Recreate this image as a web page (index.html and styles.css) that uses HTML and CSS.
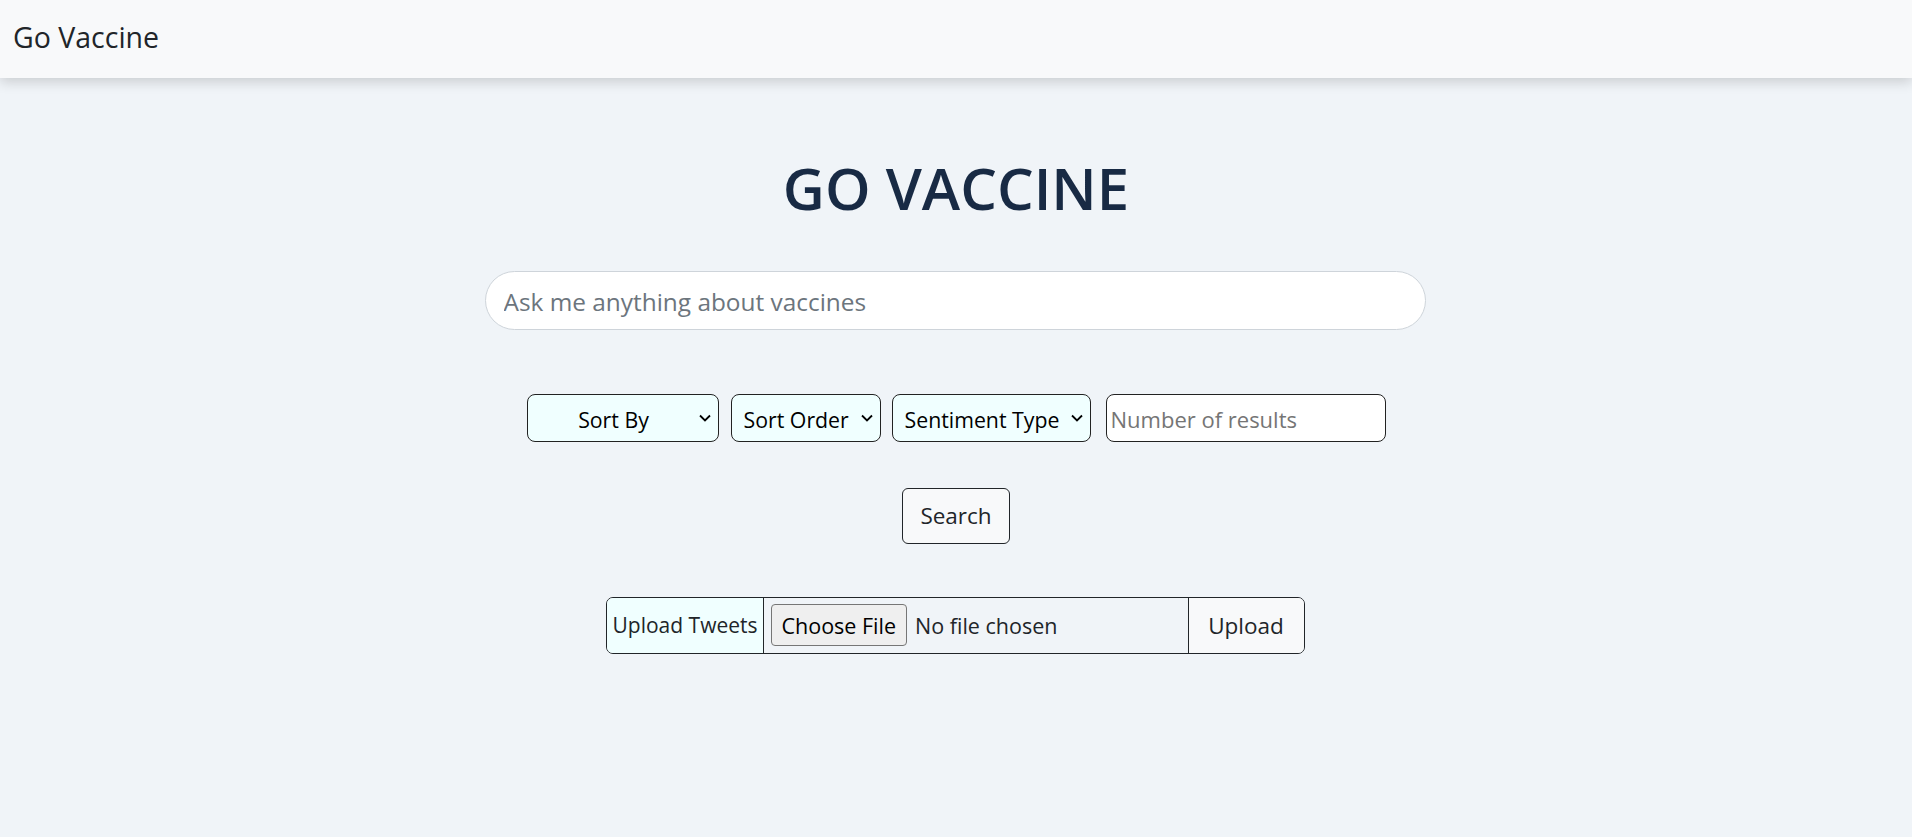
FILE: index.html
```html
<!DOCTYPE html>
<html lang="en">
<head>
<meta charset="utf-8">
<title>Go Vaccine</title>
<link rel="stylesheet" href="styles.css">
</head>
<body>
<nav class="navbar">
  <a class="brand" href="#">Go Vaccine</a>
</nav>
<main class="main">
  <h1 class="title">GO VACCINE</h1>
  <input class="query" type="text" placeholder="Ask me anything about vaccines">
  <div class="filters">
    <span class="sel sel-sortby">
      <select class="select select-center"><option>Sort By</option></select>
      <svg class="chev" viewBox="0 0 12 8" width="12" height="8"><polyline points="1,1.5 6,6.5 11,1.5" fill="none" stroke="#000" stroke-width="1.8"/></svg>
    </span>
    <span class="sel sel-order">
      <select class="select"><option>Sort Order</option></select>
      <svg class="chev" viewBox="0 0 12 8" width="12" height="8"><polyline points="1,1.5 6,6.5 11,1.5" fill="none" stroke="#000" stroke-width="1.8"/></svg>
    </span>
    <span class="sel sel-sent">
      <select class="select"><option>Sentiment Type</option></select>
      <svg class="chev" viewBox="0 0 12 8" width="12" height="8"><polyline points="1,1.5 6,6.5 11,1.5" fill="none" stroke="#000" stroke-width="1.8"/></svg>
    </span>
    <input class="count" type="number" placeholder="Number of results">
  </div>
  <button class="search-btn" type="button">Search</button>
  <div class="upload">
    <span class="upload-label">Upload Tweets</span>
    <span class="upload-file"><input class="file" type="file"></span>
    <button class="upload-btn" type="button">Upload</button>
  </div>
</main>
</body>
</html>
```
FILE: styles.css
```css
* { box-sizing: border-box; }
html, body { margin: 0; padding: 0; }
body {
  background: #f0f4f8;
  font-family: "Open Sans", "Noto Sans", sans-serif;
  color: #212529;
  min-height: 837px;
}
.navbar {
  height: 78px;
  background: #f8f9fa;
  box-shadow: 0 4px 12px rgba(0, 0, 0, 0.16);
  display: flex;
  align-items: center;
  padding: 0 0 3px 13px;
  position: relative;
  z-index: 1;
}
.brand {
  font-size: 28.5px;
  color: #212529;
  text-decoration: none;
  line-height: 1.362;
}
.main {
  display: flex;
  flex-direction: column;
  align-items: center;
  padding-top: 75px;
}
.title {
  margin: 0;
  font-size: 58px;
  line-height: 1.2;
  font-weight: 600;
  color: #182a44;
  letter-spacing: 0;
}
.query {
  margin-top: 48px;
  margin-right: 2px;
  width: 941px;
  height: 59px;
  border: 1px solid #ced4da;
  border-radius: 30px;
  background: #fff;
  padding: 3px 18px 0;
  font-family: inherit;
  font-size: 24.4px;
  color: #212529;
  outline: none;
}
.query::placeholder { color: #6c757d; }
.filters {
  margin-top: 64px;
  display: flex;
  align-items: center;
}
.sel {
  position: relative;
  display: inline-flex;
}
.sel-order { margin-left: 12px; }
.sel-sent { margin-left: 11px; }
.select {
  appearance: none;
  -webkit-appearance: none;
  height: 48px;
  border: 1px solid #222;
  border-radius: 8px;
  background: #f0ffff;
  font-family: inherit;
  font-size: 21.3px;
  color: #000;
  padding: 3px 30px 0 12px;
}
.select-center {
  text-align: center;
  text-align-last: center;
}
.sel-sortby .select { width: 192px; }
.sel-order .select { width: 150px; }
.sel-sent .select { width: 199px; }
.chev {
  position: absolute;
  right: 8px;
  top: 20px;
  pointer-events: none;
}
.count {
  margin-left: 15px;
  width: 280px;
  height: 48px;
  border: 1px solid #222;
  border-radius: 8px;
  background: #fff;
  padding: 3px 4px 0;
  font-family: inherit;
  font-size: 22px;
  color: #000;
}
.count::placeholder { color: #757575; }
.search-btn {
  margin-top: 46px;
  width: 108px;
  height: 56px;
  background: #f8f9fa;
  border: 1px solid #212529;
  border-radius: 6px;
  font-family: inherit;
  font-size: 22.5px;
  color: #212529;
  padding: 0;
}
.upload {
  margin-top: 53px;
  margin-right: 2px;
  width: 699px;
  height: 57px;
  display: flex;
  border: 1px solid #212529;
  border-radius: 7px;
  overflow: hidden;
}
.upload-label {
  width: 157px;
  background: #f0ffff;
  border-right: 1px solid #212529;
  display: flex;
  align-items: center;
  padding: 0 0 0 6px;
  font-size: 21px;
  color: #212529;
  white-space: nowrap;
}
.upload-file {
  flex: 1;
  display: flex;
  align-items: center;
  padding: 0 0 0 7px;
}
.file {
  width: 100%;
  font-family: inherit;
  font-size: 21.5px;
  color: #212529;
}
.file::file-selector-button {
  height: 42px;
  margin-right: 8px;
  padding: 0 10px;
  background: #efefef;
  border: 1px solid #767676;
  border-radius: 4px;
  font-family: inherit;
  font-size: 21.5px;
  color: #000;
}
.upload-btn {
  width: 116px;
  background: #f8f9fa;
  border: none;
  border-left: 1px solid #212529;
  font-family: inherit;
  font-size: 22.5px;
  color: #212529;
  padding: 0;
}
```
